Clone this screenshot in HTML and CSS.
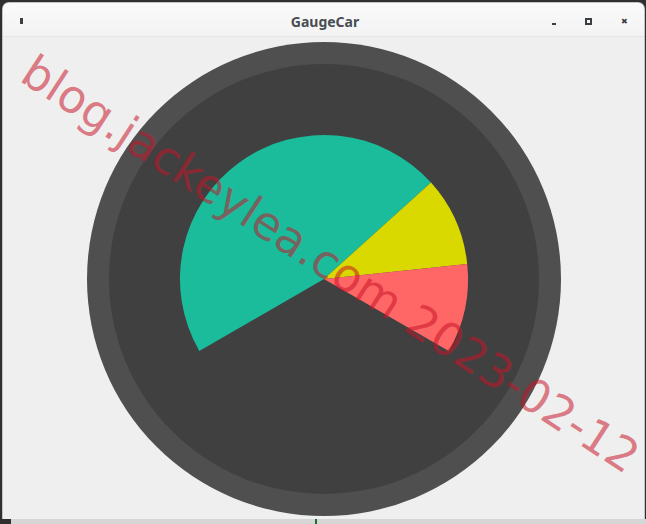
FILE: index.html
```html
<!DOCTYPE html>
<html lang="en">
<head>
  <meta charset="UTF-8">
  <meta name="viewport" content="width=device-width, initial-scale=1.0">
  <title>GaugeCar</title>
  <link rel="stylesheet" href="styles.css">
</head>
<body>
  <div class="window">
    <header class="titlebar">
      <span class="menu-btn"></span>
      <span class="title">GaugeCar</span>
      <div class="controls">
        <span class="btn-min"></span>
        <span class="btn-max"></span>
        <span class="btn-close">&#x2716;</span>
      </div>
    </header>
    <main class="content">
      <svg class="gauge" width="480" height="480" viewBox="-240 -240 480 480">
        <circle class="ring" r="237"></circle>
        <circle class="face" r="215"></circle>
        <!-- 240 degree sweep, starting at 210deg, split 70 / 15 / 15 -->
        <path class="seg-ok" d="M0 0 L-124.7 72 A144 144 0 0 1 107.0 -96.4 Z"></path>
        <path class="seg-warn" d="M0 0 L107.0 -96.4 A144 144 0 0 1 143.2 -15.1 Z"></path>
        <path class="seg-danger" d="M0 0 L143.2 -15.1 A144 144 0 0 1 124.7 72 Z"></path>
      </svg>
    </main>
  </div>
  <div class="dock"><span class="dock-mark"></span></div>
  <svg class="watermark" width="646" height="524">
    <text x="18" y="80" transform="rotate(33 18 80)">blog.jackeylea.com 2023-02-12</text>
  </svg>
</body>
</html>
```

FILE: styles.css
```css
:root {
  --bg-window: #efefef;
  --ring: #4f4f4f;
  --face: #404040;
  --ok: #1abc9c;
  --warn: #d9d900;
  --danger: #ff6666;
}
html, body {
  margin: 0;
  height: 100%;
}
body {
  display: flex;
  flex-direction: column;
  background: #2f2f2f;
  font-family: "Noto Sans", "DejaVu Sans", sans-serif;
  overflow: hidden;
}
.window {
  margin: 3px 2px 0 3px;
  height: 516px;
  display: flex;
  flex-direction: column;
  background: var(--bg-window);
  border-radius: 6px 6px 0 0;
  box-shadow: 0 0 0 1px #c4c4c4;
  overflow: hidden;
}
.titlebar {
  height: 34px;
  flex: none;
  display: grid;
  grid-template-columns: 1fr auto 1fr;
  align-items: center;
  padding: 0 16px 0 17px;
  background: linear-gradient(#fafafa, #f3f3f3);
  border-bottom: 1px solid #e6e6e6;
  box-sizing: border-box;
}
.menu-btn {
  width: 3px;
  height: 6px;
  background: #3c3f42;
  margin-top: 3px;
}
.title {
  font-size: 14px;
  font-weight: bold;
  color: #474d53;
  margin-top: 3px;
  padding-left: 2px;
}
.controls {
  justify-self: end;
  display: flex;
  align-items: center;
  gap: 29px;
  margin-top: 3px;
}
.btn-min {
  width: 4px;
  height: 2px;
  background: #3c3f42;
  margin-top: 5px;
}
.btn-max {
  width: 3px;
  height: 3px;
  border: 2px solid #3c3f42;
}
.btn-close {
  font-size: 8px;
  line-height: 8px;
  font-weight: bold;
  color: #3c3f42;
  width: 7px;
}
.content {
  flex: 1;
  display: flex;
  align-items: center;
  justify-content: center;
  padding: 1px 0 0 1px;
}
.gauge {
  flex: none;
}
.ring { fill: var(--ring); }
.face { fill: var(--face); }
.seg-ok { fill: var(--ok); }
.seg-warn { fill: var(--warn); }
.seg-danger { fill: var(--danger); }
.dock {
  flex: 1;
  position: relative;
  background: linear-gradient(90deg, #2f2f2f 11px, #d6d6d6 11px);
}
.dock-mark {
  position: absolute;
  left: 315px;
  top: 0;
  width: 2px;
  height: 5px;
  background: #1f6d2a;
}
.watermark {
  position: absolute;
  left: 0;
  top: 0;
  pointer-events: none;
}
.watermark text {
  font-family: "DejaVu Sans", sans-serif;
  font-size: 46px;
  fill: rgba(200, 20, 40, 0.55);
}
```
